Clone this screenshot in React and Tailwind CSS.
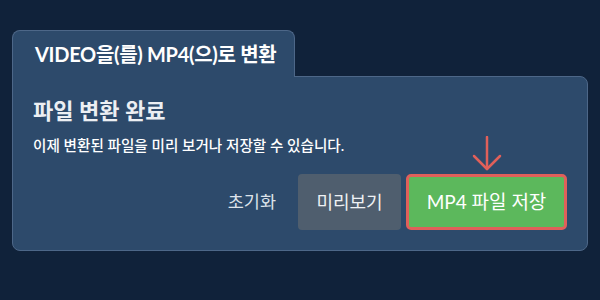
export default function App() {
  const font = { fontFamily: "Lato, 'Noto Sans CJK KR', sans-serif" };
  return (
    <div className="w-[600px] h-[300px] bg-[#10223a] pt-[30px] px-[12px]" style={font}>
      <div className="flex flex-col">
        <div className="relative z-10 -mb-px h-[47px] w-[283px] rounded-t-[8px] border border-b-0 border-[#4d6788] bg-[#2d4a6b] flex items-center pl-[22px]">
          <span className="text-white text-[20px] font-bold tracking-[-0.3px] leading-none">VIDEO을(를) MP4(으)로 변환</span>
        </div>
        <div className="h-[175px] w-[576px] rounded-b-[8px] rounded-tr-[8px] border border-[#4d6788] bg-[#2d4a6b] pl-[20px] pr-[20px] pt-[19px]">
          <div className="text-[#eceff3] text-[22px] font-semibold leading-[30px]">파일 변환 완료</div>
          <div className="text-white text-[14.6px] font-medium leading-[20px] mt-[10px]">이제 변환된 파일을 미리 보거나 저장할 수 있습니다.</div>
          <div className="flex justify-end items-center mt-[18px] relative">
            <span className="text-[#dde3ea] text-[17.5px] mr-[22px]">초기화</span>
            <div className="w-[103px] h-[56px] rounded-[4px] bg-[#4f5e6e] flex items-center justify-center text-[#eef1f4] text-[18px] mr-[5px]">미리보기</div>
            <div className="relative w-[161px] h-[56px] rounded-[5px] border-[3px] border-[#e0605a] bg-[#5cb85c] flex items-center justify-center text-white text-[19px]">
              MP4 파일 저장
              <svg className="absolute left-1/2 -translate-x-1/2 -top-[41px]" width="30" height="36" viewBox="0 0 30 36" fill="none" stroke="#e0605a" strokeWidth="2.5" strokeLinecap="round" strokeLinejoin="round">
                <path d="M15 1 V33" />
                <path d="M2 20 L15 33 L28 20" />
              </svg>
            </div>
          </div>
        </div>
      </div>
    </div>
  );
}
